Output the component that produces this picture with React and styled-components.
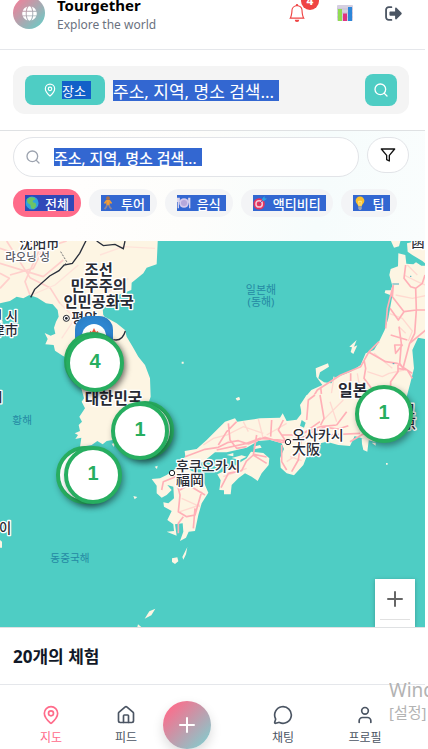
import React from "react";
import styled, { createGlobalStyle, css } from "styled-components";
import { MapPin, House, MessageCircle, User, Plus, Search } from "lucide-react";
import { FaGlobe } from "react-icons/fa";
import { BsBell } from "react-icons/bs";
import { FiFilter } from "react-icons/fi";

const GlobalStyle = createGlobalStyle`
  * { box-sizing: border-box; }
  body {
    margin: 0;
    background: #fff;
    color: #111827;
    font-family: "Noto Sans", "Noto Sans CJK KR", sans-serif;
    overflow: hidden;
  }
  button, input { font-family: inherit; }
  button { cursor: pointer; }
  h1, h2, p { margin: 0; }
`;

const Page = styled.div`
  position: relative;
  display: flex;
  flex-direction: column;
  height: 100vh;
  padding-right: 3px;
  overflow: hidden;
`;

const Header = styled.header`
  display: flex;
  align-items: center;
  justify-content: space-between;
  margin-top: -23px;
  padding: 16px 20px 16px 13px;
  border-bottom: 1px solid #e5e7eb;
`;

const Brand = styled.div`
  display: flex;
  align-items: center;
  gap: 12px;
`;

const Logo = styled.div`
  display: grid;
  place-items: center;
  width: 32px;
  height: 32px;
  border-radius: 50%;
  color: #fff;
  background: linear-gradient(135deg, #ff6b8a, #4ecdc4);
  opacity: 0.9;
`;

const BrandName = styled.h1`
  font: 700 15px/24px "Noto Sans", sans-serif;
  color: #000;
`;

const Tagline = styled.p`
  font-size: 12px;
  line-height: 16px;
  color: #6b7280;
`;

const HeaderActions = styled.div`
  display: flex;
  gap: 24px;
`;

const IconButton = styled.button`
  position: relative;
  display: grid;
  place-items: center;
  width: 24px;
  height: 24px;
  padding: 0;
  border: 0;
  background: none;
  color: ${(p) => p.$color};
`;

const Badge = styled.span`
  position: absolute;
  top: -9px;
  right: -10px;
  width: 18px;
  height: 18px;
  border-radius: 50%;
  background: #ef4444;
  color: #fff;
  font: 700 12px/18px "Noto Sans", sans-serif;
`;

const PlaceSection = styled.section`
  padding: 16px 16px 16px 13px;
  border-bottom: 1px solid #dfe1e3;
`;

const PlaceBar = styled.form`
  display: flex;
  align-items: center;
  gap: 8px;
  height: 48px;
  padding: 0 12px;
  border-radius: 12px;
  background: #f4f4f4;
`;

const PlaceButton = styled.button`
  display: flex;
  align-items: center;
  justify-content: center;
  gap: 5px;
  flex: none;
  width: 80px;
  height: 30px;
  padding: 0 0 0 4px;
  border: 0;
  border-radius: 8px;
  background: #4ecdc4;
  color: #fff;
  font-size: 13px;
`;

const Mark = styled.span`
  display: inline-flex;
  align-items: center;
  gap: 6px;
  height: ${(p) => p.$height || 16}px;
  padding-right: 5px;
  background: ${(p) => p.$tone || "#3367d1"};
  color: #fff;
  white-space: nowrap;
`;

const Field = styled.div`
  display: flex;
  flex: 1;
  min-width: 0;
`;

const QueryInput = styled.input`
  field-sizing: content;
  height: ${(p) => p.$height}px;
  padding: 0 5px 0 0;
  border: 0;
  outline: 0;
  background: #3367d1;
  color: #fff;
  font-size: ${(p) => p.$size}px;
  font-weight: ${(p) => p.$weight};
  &::placeholder { color: #fff; opacity: 1; }
`;

const SearchButton = styled.button`
  display: grid;
  place-items: center;
  flex: none;
  width: 32px;
  height: 32px;
  padding: 0;
  border: 0;
  border-radius: 8px;
  background: #4ecdc4;
  color: #fff;
`;

const Filters = styled.section`
  display: flex;
  flex-direction: column;
  gap: 12px;
  padding: 6px 16px 24px 13px;
  background: linear-gradient(100deg, #fffefd 20%, #fdfdfb 45%, #f6fcfc 75%, #fafdfd);
`;

const FilterRow = styled.div`
  display: flex;
  align-items: flex-start;
  gap: 8px;
`;

const SearchBox = styled.label`
  display: flex;
  align-items: center;
  gap: 13px;
  flex: 1;
  min-width: 0;
  height: 40px;
  padding: 0 12px 0 11px;
  border: 1px solid #e2e4e8;
  border-radius: 20px;
  background: #fff;
  color: #9ca3af;
`;

const FilterButton = styled.button`
  display: grid;
  place-items: center;
  width: 42px;
  height: 36px;
  padding: 0;
  border: 1px solid #e2e4e8;
  border-radius: 18px;
  background: #fff;
  color: #111;
`;

const Chips = styled.div`
  display: flex;
  gap: 8px;
`;

const Chip = styled.button`
  display: flex;
  align-items: center;
  height: 28px;
  padding: 0 7px 0 12px;
  border: 0;
  border-radius: 14px;
  background: #f3f4f6;
  font-size: 13px;
  font-weight: 500;
  ${(p) => p.$active && css`background: #ff6b8a;`}
`;

const MapArea = styled.main`
  position: relative;
  flex: 1;
  min-height: 0;
  overflow: hidden;
  background: #4ecdc4;
  border-bottom: 1px solid #dfe1e3;
`;

const MapDrawing = styled.svg`
  display: block;
  width: 100%;
  height: 100%;
  text { font-family: "Noto Sans", "Noto Sans CJK KR", sans-serif; }
`;

const Pin = styled.button`
  position: absolute;
  width: 58px;
  height: 58px;
  margin: -29px 0 0 -29px;
  padding: 0 0 5px;
  border: 4px solid #27ae60;
  border-radius: 50%;
  background: #fff;
  box-shadow: 2px 3px 6px rgba(0, 0, 0, 0.38);
  color: #27ae60;
  font: 700 20px/24px "Liberation Sans", sans-serif;
`;

const SpotPin = styled.button`
  position: absolute;
  display: flex;
  justify-content: center;
  width: 38px;
  height: 38px;
  padding: 8px 0 0;
  margin: -19px 0 0 -19px;
  border: 0;
  border-radius: 14px;
  background: radial-gradient(circle at 50% 55%, #2e86d0 55%, #2779bd);
`;

const ZoomControl = styled.div`
  position: absolute;
  right: 10px;
  bottom: 0;
  width: 40px;
  height: 48px;
  padding: 0 5px;
  background: #fff;
  box-shadow: 0 1px 4px rgba(0, 0, 0, 0.25);
`;

const ZoomIn = styled.button`
  display: grid;
  place-items: center;
  width: 100%;
  height: 41px;
  padding: 0;
  border: 0;
  border-bottom: 1px solid #e1e1e1;
  background: none;
  color: #666;
`;

const Results = styled.section`
  padding: 16px 13px 15px;
  h2 { font-size: 17px; line-height: 25px; font-weight: 700; }
`;

const Nav = styled.nav`
  display: grid;
  grid-template-columns: 76fr 74fr 79fr 82fr 82fr;
  padding: 16px 19px 0 13px;
  border-top: 1px solid #e5e7eb;
  background: #fff;
`;

const NavLink = styled.a`
  display: flex;
  flex-direction: column;
  align-items: center;
  gap: 4px;
  padding-top: 4px;
  color: ${(p) => (p.$active ? "#ff6b8a" : "#4b5563")};
  font-size: 12px;
  line-height: 17px;
  text-decoration: none;
`;

const CreateButton = styled.button`
  display: grid;
  place-items: center;
  width: 48px;
  height: 48px;
  padding: 0;
  border: 0;
  border-radius: 50%;
  background: linear-gradient(135deg, #ff6b8a 10%, #7fcfd0 95%);
  box-shadow: 0 5px 12px rgba(0, 0, 0, 0.14);
  color: #fff;
`;

const SystemNotice = styled.div`
  position: absolute;
  right: 0;
  bottom: 27px;
  width: 39px;
  overflow: hidden;
  white-space: nowrap;
  color: #b3b3b3;
  font-size: 15px;
  line-height: 20px;
  pointer-events: none;
  p:first-child { font-size: 19px; line-height: 24px; }
`;

const Glyph = ({ children, size = 14 }) => (
  <svg width={size} height={size} viewBox="0 0 16 16" aria-hidden="true">{children}</svg>
);

const EarthGlyph = () => (
  <Glyph>
    <circle cx="8" cy="8" r="7.5" fill="#2fa3e0" />
    <path d="M2 4 6 1l5 1 1 2-3 1v2l3 1 1 3-3 4-3-1-1-4-3-2z" fill="#6cc466" />
    <path d="M1 5a7.5 7.5 0 0 0 4 10" fill="none" stroke="#2463ae" />
  </Glyph>
);
const WalkGlyph = () => (
  <Glyph>
    <circle cx="8" cy="2.5" r="2.2" fill="#a8704b" />
    <path d="M6 4.500h4v6H6z" fill="#f39c35" />
    <path d="m6.500 5-2.500 3.500M9.500 5l2.500 3.500" fill="none" stroke="#f39c35" strokeWidth="1.800" />
    <path d="M7 10 6 12.500 4 15M9 10l1 2.500 2 2.500" fill="none" stroke="#8e8494" strokeWidth="2" />
  </Glyph>
);
const PlateGlyph = () => (
  <Glyph>
    <circle cx="8" cy="8" r="5.500" fill="#d4c8ec" />
    <circle cx="8" cy="8" r="3.500" fill="#b6a8db" />
    <path d="M1.500 2v12M14.500 2v12M.5 2v4h2V2M13.500 2v5h1.500" fill="none" stroke="#ddd6ee" strokeWidth="1.500" />
  </Glyph>
);
const TargetGlyph = () => (
  <Glyph>
    <circle cx="7" cy="9" r="6.500" fill="#e5345f" />
    <circle cx="7" cy="9" r="4.500" fill="#f5c6d5" />
    <circle cx="7" cy="9" r="2.800" fill="#e5345f" />
    <path d="m7 9 6-6" stroke="#6d4fa3" />
    <path d="m10 4 3-4 .5 2.500 2.500.5-4 3z" fill="#2aa5e6" />
  </Glyph>
);
const BulbGlyph = () => (
  <Glyph>
    <path d="M8 .5a5 5 0 0 0-5 5c0 3 3 4 3 6.500h4C10 9.500 13 8.500 13 5.500a5 5 0 0 0-5-5z" fill="#fbc02d" />
    <path d="M7 11 6.500 6h3L9 11" fill="none" stroke="#fff0a8" />
    <path d="M6 12h4v2.500L9 16H7l-1-1.500z" fill="#9aa5b8" />
  </Glyph>
);
const ChartGlyph = () => (
  <Glyph size={16}>
    <rect width="16" height="16" rx="1" fill="#d5cfe0" />
    <path d="M0 4h16M0 8h16M0 12h16" stroke="#bdb5cd" strokeWidth=".6" />
    <rect x="1" y="4" width="4" height="12" fill="#91dc52" />
    <rect x="6" y="8.500" width="4" height="7.500" fill="#df3380" />
    <rect x="11" y="2" width="4" height="14" fill="#2c86d9" />
  </Glyph>
);
const LogoutGlyph = () => (
  <Glyph size={17}>
    <path d="M6 2H3.500A2.500 2.500 0 0 0 1 4.500v7A2.500 2.500 0 0 0 3.500 14H6" fill="none" stroke="currentColor" strokeWidth="1.700" strokeLinecap="round" />
    <path d="M5 6h4.500V3.200c0-.8.8-1 1.300-.5l4.700 4.600c.4.4.4 1 0 1.400l-4.700 4.600c-.5.5-1.300.3-1.300-.5V10H5c-.5 0-.8-.3-.8-.8V6.800c0-.5.300-.8.800-.8z" fill="currentColor" />
  </Glyph>
);
const CampfireGlyph = () => (
  <svg width="24" height="24" viewBox="0 0 24 24" aria-hidden="true">
    <circle cx="12" cy="12" r="12" fill="#fff" />
    <path d="M6 13c0-3 2-3 2-6l2 1 2-4 2 4 2-1c0 3 3 4 2 6l-6 3z" fill="#f05a38" />
    <path d="m6 19 12-3M6 16l12 3" stroke="#8a5138" strokeWidth="2" />
  </svg>
);

const LAND = "#fdf5e3";

const Label = ({ x, y, size = 44, weight = 500, color = "#272a33", halo = "#fff", anchor = "start", lines, leading = 48 }) => (
  <text fontSize={size} fontWeight={weight} fill={color} stroke={halo} strokeWidth={halo === "none" ? 0 : 8}
    strokeLinejoin="round" paintOrder="stroke" textAnchor={anchor}>
    {lines.map((line, i) => <tspan key={line} x={x} y={y + i * leading}>{line}</tspan>)}
  </text>
);

const RegionMap = () => (
  <MapDrawing viewBox="0 18 1275 1158" preserveAspectRatio="xMidYMid slice" role="img" aria-label="한국과 일본 지도">
    <g fill={LAND}>
      <path d="M0 0H474L470 88 440 98 430 115 395 143 394 165 355 180 330 205 308 220 310 243 350 265 375 285 380 305 398 335 415 365 435 390 450 430 452 485 440 520 420 550 345 600 338 615 320 618 308 628 292 618 275 630 240 636 244 608 226 612 234 600 224 595 240 588 236 570 246 560 238 545 255 520 245 500 252 490 244 460 252 445 235 420 210 390 215 375 188 362 165 347 161 330 136 328 143 312 134 294 152 302 166 296 162 278 168 260 176 245 173 225 158 208 138 205 112 188 88 180 70 190 50 185 30 198 0 205Z" />
      <path d="M240 640h45l20 12-60 4zM335 626l10-2-4 12zM0 915l6 5v18H0zM545 380h6v6h-6zM426 610l10-5-6 12zM400 783l12 3-8 7zM562 936l-4 22-8 16-3-8zM516 970l16-3 3 12-10 8-9-6zM466 1121l-12 20-20 10 14-22zM414 1168l10 8h-12z" />
    </g>
    <g fill="none" stroke="#ffd0cc" strokeWidth="5" strokeLinejoin="round">
      <path d="M0 160 28 130 0 115M0 40l60 20 40-42M20 18l70 110 60 30 30 48M30 120l70-20 30-60 70-22M90 180 75 140 120 40M0 85l130 40 60-50" />
    </g>
    <g fill="none" stroke="#ffe3da" strokeWidth="4" strokeLinejoin="round">
      <path d="m95 180 70-30 70-60M180 205l45 45-40 60M225 245l25 75M225 245l50-40 110-75M300 60l70-25 95 5M310 240l-30 60-80 70" />
    </g>
    <g fill="none" stroke="#292f3b" strokeWidth="3">
      <path d="m92 187 12-24 45-40 28-16 15-17 25-5 22-30 20-40M290 18l20 14 35-4 25 13 5-23" strokeWidth="4" />
      <path d="m182 50 18 30-8 14" strokeDasharray="6 4" strokeWidth="2" />
      <path d="M340 314c18 4 30-4 36-26" strokeWidth="4" />
    </g>

    <g transform="translate(642 0)">
      <path fill={LAND} d="M553 55 574 60 577 86 598 88 606 82 622 92H650V300L633 312 612 308 595 345 600 400 590 440 578 485 560 520V600L480 620 445 610 410 600 270 630 262 545 262 515 275 485 292 465 325 450 307 425 305 400 342 385 345 395 318 412 313 430 330 442 352 445 362 428 385 420 410 410 440 390 455 355 480 345 495 320 512 285 523 250 530 210 535 182 512 174 514 166 530 166 535 152 526 120 530 102 552 94Z" />
      <path fill={LAND} d="M530 16h30l-5 18-15 4zM595 60l-14-10-2-25 20-5h51v78l-25-20zM428 315l-8 20 10-4-12 26-8-6 4-14-8-2zM65 490l10-4 2 7-9 3z" />
      <g fill="none" stroke="#ffd9d0" strokeWidth="4" strokeLinejoin="round">
        <path d="m545 180 50 10 40-8M570 120l40 20 23 10M525 235l40 15 30 38-12 30M555 275l20 20M460 410l45 15 20-10 45-10M430 415l10 60M275 520l75-30 10-65M345 570l45-40M580 90l30 30M480 355l55 45" />
      </g>
      <g fill="none" stroke="#ffb0b7" strokeWidth="5" strokeLinejoin="round">
        <path d="M575 90 570 130 590 155 605 160 625 145 633 120M605 160l2 65-37 5-35-45 3-35M607 225h26M570 230l-17 25-25-35M607 225l-5 70-15 30-20 75-10-15 5-60-7-50M515 280l5-60 18-70M530 300l50 15M587 325l48-40M565 330l-20 25-3-25zM495 320l-30 30-25 45-60 25-70 45-30 50-8 55M465 352l50 28 35 5 45 30M450 375l5 25-5 30 30 40M552 390v20l-22 30v20M550 400l30 5 15 25M410 415v50l-20 40 20 40 40 50M320 455l5 50-10 50" />
      </g>
      <path d="M535 147h20M536 386h5M588 124h4" stroke="#4ba9bd" strokeWidth="3" />
    </g>

    <g transform="translate(450 480)">
      <g fill={LAND}>
        <path d="M470 0 450 30 455 55 440 74 410 78 398 55 390 68 330 70 290 76 262 80 255 70 225 80 200 105 170 135 140 162 104 168 106 185 95 195 110 218 160 200 195 172 230 172 290 158 325 138 360 135 395 145 402 162 390 190 392 218 410 235 432 241 460 210 468 190 490 150 530 140 565 150 600 153 620 110 680 20 600-10Z" />
        <path d="M75 222 50 240 30 250 5 252 20 272 20 295 35 308 50 300 65 285 52 270 70 275 72 310 55 325 40 322 42 335 65 348 52 375 70 388 72 408 50 410 80 422 75 388 98 385 100 410 90 438 108 428 116 410 135 408 145 360 155 325 175 293 165 270 150 240 120 225Z" />
        <path d="M290 190 303 170 340 174 358 190 356 210 335 235 323 258 305 245 285 235 265 250 245 270 242 298 222 298 222 286 208 285 212 256 202 238 250 215Z" />
        <path d="M260 10l8-3 2 7-8 3zM635 130h22l-5 40-12-5-4-18zM665 143h12v9zM708 204h5v5h-5zM310 155l20-5 5 8-20 4zM230 180l20-6v10zM14 215l9-3-2 10zM245 189l30-8 15 4-20 10z" />
      </g>
      <g fill="#4ecdc4"><path d="M455 75l12 8-5 15-12-6zM452 105l10 20-12 5z" /></g>
      <g fill="none" stroke="#ffd9d0" strokeWidth="4">
        <path d="m160 150 30-20 40-10 50-25 60 20M280 80l15 30M325 72l15 60M410 85l-60 35M420 185l35 12M220 245l70-25M90 350l60-20M410 200l30-20M520 75l60-60M560 80l-20-60M95 310l55 25" />
      </g>
      <g fill="none" stroke="#ffb0b7" strokeWidth="5" strokeLinejoin="round">
        <path d="m105 185 60-22 40-6 30-15 30-5 30 10 50-20 50 15 60-10 30-20 40-15 40 5 30-10M205 150l25-40 30-30M235 85l5 50 20 25 30-5M200 165l90-20 40-15 60 5 30 5 40-25 50-35M365 75l-3 50M400 75l-15 30 20 30M320 120l-10 60M470 75l5-60 20-15M510 0l12 70-10 20M310 178l40 8M290 198l20-18 40 25M213 278l22-43 40-8 15-30M395 150v50l15 25M455 125l-10 70-20 35M90 285l25-15 50 30M80 260l10 40-5 50 25 15 25-5 20-70M100 365l-15 20v30M130 400l5-60M35 285l5-25 50-20M395 120l50 0 65-25 50-5M600 140l60-35M530 120l100-5M560 90l30-40" />
      </g>
    </g>

    <Label x={58} y={38} size={40} lines={["沈阳市"]} />
    <Label x={16} y={77} size={34} color="#5a5c66" lines={["랴오닝 성"]} />
    <Label x={296} y={120} size={46} weight={700} anchor="middle" leading={48} lines={["조선", "민주주의", "인민공화국"]} />
    <circle cx="199" cy="250" r="9" fill="#fff" stroke="#20232b" strokeWidth="3" />
    <circle cx="199" cy="250" r="4" fill="#20232b" />
    <Label x={214} y={264} size={42} lines={["평양"]} />
    <Label x={54} y={257} size={40} anchor="end" leading={42} lines={["선 시", "津市"]} />
    <Label x={8} y={502} size={40} anchor="end" lines={["시"]} />
    <Label x={34} y={895} size={40} anchor="end" lines={["하이"]} />
    <Label x={254} y={508} size={47} weight={700} lines={["대한민국"]} />
    <Label x={37} y={566} size={32} weight={400} color="#2589a3" halo="none" lines={["황해"]} />
    <Label x={151} y={980} size={32} weight={400} color="#2589a3" halo="none" lines={["동중국해"]} />
    <Label x={783} y={176} size={33} weight={400} color="#2589a3" halo="none" anchor="middle" leading={36} lines={["일본해", "(동해)"]} />
    <Label x={1014} y={484} size={48} weight={700} lines={["일본"]} />
    <Label x={1208} y={536} size={40} leading={42} lines={["쿄", "京"]} />
    <Label x={1234} y={37} size={40} lines={["函館"]} />
    <Label x={528} y={708} size={42} leading={42} lines={["후쿠오카시", "福岡"]} />
    <Label x={876} y={616} size={42} leading={42} lines={["오사카시", "大阪"]} />
    <circle cx="516" cy="714" r="8" fill="#fff" stroke="#20232b" strokeWidth="3" />
    <circle cx="864" cy="621" r="8" fill="#fff" stroke="#20232b" strokeWidth="3" />
  </MapDrawing>
);

const pins = [
  { x: 93, y: 120, label: "" },
  { x: 95, y: 122, label: "4" },
  { x: 145, y: 189, label: "" },
  { x: 140, y: 190, label: "1" },
  { x: 85, y: 234, label: "" },
  { x: 93, y: 234, label: "1" },
  { x: 384, y: 173, label: "1" },
];

const place = ({ x, y }) => ({ left: `${(x / 425) * 100}%`, top: `${(y / 386) * 100}%` });

const categories = [
  { label: "전체", Icon: EarthGlyph, active: true },
  { label: "투어", Icon: WalkGlyph },
  { label: "음식", Icon: PlateGlyph },
  { label: "액티비티", Icon: TargetGlyph },
  { label: "팁", Icon: BulbGlyph },
];

export default function App() {
  return (
    <Page>
      <GlobalStyle />
      <Header>
        <Brand>
          <Logo><FaGlobe size={15} /></Logo>
          <div>
            <BrandName>Tourgether</BrandName>
            <Tagline>Explore the world</Tagline>
          </div>
        </Brand>
        <HeaderActions>
          <IconButton $color="#ef4444" aria-label="알림"><BsBell size={18} /><Badge>4</Badge></IconButton>
          <IconButton aria-label="통계"><ChartGlyph /></IconButton>
          <IconButton $color="#4b5563" aria-label="로그아웃"><LogoutGlyph /></IconButton>
        </HeaderActions>
      </Header>

      <PlaceSection>
        <PlaceBar onSubmit={(e) => e.preventDefault()}>
          <PlaceButton type="button"><MapPin size={14} /><Mark $tone="#1260c8" $height={18}>장소</Mark></PlaceButton>
          <Field><QueryInput $size={17} $height={21} $weight={400} placeholder="주소, 지역, 명소 검색..." aria-label="장소 검색" /></Field>
          <SearchButton aria-label="검색"><Search size={16} /></SearchButton>
        </PlaceBar>
      </PlaceSection>

      <Filters>
        <FilterRow>
          <SearchBox>
            <Search size={16} />
            <Field><QueryInput $size={15} $height={18} $weight={500} placeholder="주소, 지역, 명소 검색..." aria-label="체험 검색" /></Field>
          </SearchBox>
          <FilterButton aria-label="필터"><FiFilter size={16} /></FilterButton>
        </FilterRow>
        <Chips>
          {categories.map(({ label, Icon, active }) => (
            <Chip key={label} $active={active} aria-pressed={!!active}>
              <Mark $tone={active ? "#3048b8" : undefined}><Icon />{label}</Mark>
            </Chip>
          ))}
        </Chips>
      </Filters>

      <MapArea>
        <RegionMap />
        <SpotPin style={place({ x: 94, y: 94 })} aria-label="캠핑 체험"><CampfireGlyph /></SpotPin>
        {pins.map((pin) => (
          <Pin key={`${pin.x}-${pin.y}`} style={place(pin)} aria-label={`체험 ${pin.label}`}>{pin.label}</Pin>
        ))}
        <ZoomControl><ZoomIn aria-label="확대"><Plus size={24} strokeWidth={2} /></ZoomIn></ZoomControl>
      </MapArea>

      <Results><h2>20개의 체험</h2></Results>

      <Nav>
        <NavLink href="#map" $active><MapPin size={20} />지도</NavLink>
        <NavLink href="#feed"><House size={20} />피드</NavLink>
        <CreateButton aria-label="만들기"><Plus size={24} /></CreateButton>
        <NavLink href="#chat"><MessageCircle size={20} />채팅</NavLink>
        <NavLink href="#profile"><User size={20} />프로필</NavLink>
      </Nav>

      <SystemNotice><p>Windows</p><p>[설정]</p></SystemNotice>
    </Page>
  );
}
